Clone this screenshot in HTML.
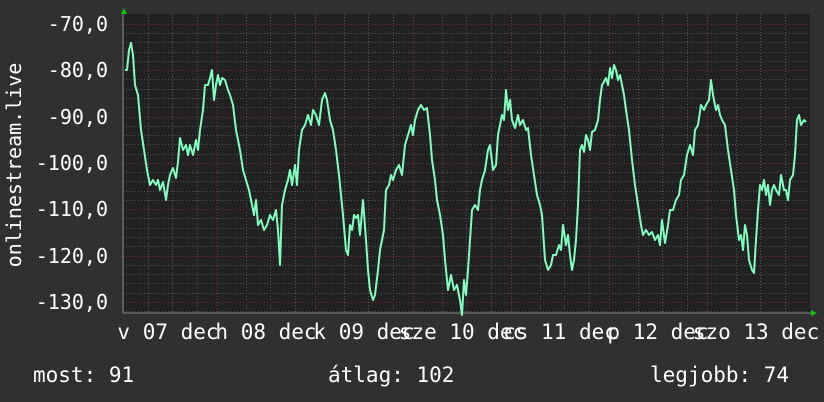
<!DOCTYPE html>
<html><head><meta charset="utf-8"><style>
body{margin:0;background:#303030;width:824px;height:402px;overflow:hidden;font-family:"DejaVu Sans Mono","Liberation Mono",monospace;}
svg{position:absolute;left:0;top:0}
</style></head><body>
<svg width="824" height="402" xmlns="http://www.w3.org/2000/svg" font-family="DejaVu Sans Mono, Liberation Mono, monospace" font-size="20" fill="#fff">
<rect x="0" y="0" width="824" height="402" fill="#303030"/>
<rect x="123" y="14" width="687" height="299" fill="#212121"/>
<g stroke="#555" stroke-width="1" stroke-dasharray="1,2">
<path d="M148.5 14V313M172.5 14V313M197.5 14V313M246.5 14V313M270.5 14V313M295.5 14V313M344.5 14V313M368.5 14V313M393.5 14V313M442.5 14V313M466.5 14V313M491.5 14V313M540.5 14V313M564.5 14V313M589.5 14V313M638.5 14V313M662.5 14V313M687.5 14V313M736.5 14V313M760.5 14V313M785.5 14V313"/>
<path d="M123 33.5H810M123 42.5H810M123 52.5H810M123 61.5H810M123 79.5H810M123 89.5H810M123 98.5H810M123 107.5H810M123 126.5H810M123 135.5H810M123 144.5H810M123 154.5H810M123 172.5H810M123 181.5H810M123 191.5H810M123 200.5H810M123 218.5H810M123 228.5H810M123 237.5H810M123 246.5H810M123 265.5H810M123 274.5H810M123 283.5H810M123 293.5H810M123 311.5H810"/>
</g>
<g stroke="#7a3535" stroke-width="1" stroke-dasharray="1,2">
<path d="M217.5 14V313M315.5 14V313M413.5 14V313M511.5 14V313M609.5 14V313M707.5 14V313"/>
<path d="M123 24.5H810M123 70.5H810M123 117.5H810M123 163.5H810M123 209.5H810M123 256.5H810M123 302.5H810"/>
</g>
<path d="M123 313H812M123 313V10" stroke="#888" stroke-width="1"/>
<path d="M121 14l3-6 3 6z" fill="#0c0"/>
<path d="M811 310l6 3-6 3z" fill="#0c0"/>
<polyline fill="none" stroke="#80ffc0" stroke-width="2" stroke-linejoin="round" points="125,70 127,70 129,50 131,43 133,55 135,85 138,95 141,130 144,150 147,170 150,185 153,180 156,185 158,180 160,190 163,182 166,200 168,185 170,175 173,168 176,178 178,162 180,138 183,150 186,145 188,155 190,145 193,155 196,140 198,150 200,130 203,110 205,85 208,85 210,78 212,70 214,100 216,85 218,75 220,85 222,78 225,80 228,90 230,95 233,105 236,130 240,150 243,170 246,180 249,190 252,205 254,215 256,200 258,225 261,220 264,230 267,225 270,215 273,220 276,210 278,230 280,265 282,205 285,190 288,180 290,170 292,185 295,165 297,185 299,150 302,130 305,125 308,115 311,125 313,110 316,115 319,125 322,100 325,93 327,100 330,120 333,130 336,150 339,175 341,195 343,215 346,250 348,255 350,225 352,230 354,215 356,218 358,215 360,235 363,200 366,240 368,270 370,290 373,300 375,295 378,270 380,250 382,240 384,230 386,190 389,185 391,175 393,180 396,170 399,165 402,175 405,145 408,135 411,125 413,135 415,120 418,110 421,105 424,110 427,108 430,135 432,160 435,180 437,200 440,215 443,235 445,260 448,290 451,275 454,290 457,285 460,300 462,315 464,280 466,295 468,270 472,210 475,205 478,210 480,190 482,180 485,170 488,150 490,145 493,170 496,165 498,135 500,125 502,115 504,120 506,90 508,110 510,100 512,120 515,128 518,115 520,125 523,120 526,130 528,128 531,155 534,175 537,195 540,205 542,215 545,260 548,270 551,265 553,255 556,255 559,245 561,250 563,225 566,245 568,235 570,255 572,270 574,260 576,240 578,205 580,150 582,145 584,152 586,135 588,140 590,150 592,132 595,130 598,120 600,100 602,85 604,82 606,78 608,85 610,68 612,78 614,65 616,70 618,80 620,75 622,85 624,95 626,110 629,130 632,160 635,185 638,205 641,225 643,235 646,230 649,235 652,232 655,240 658,235 660,245 662,220 665,243 668,225 670,210 673,210 676,200 679,195 681,180 684,175 687,155 690,145 693,155 695,130 698,125 701,105 704,110 706,105 709,100 711,80 713,95 716,110 718,105 720,115 722,120 725,125 728,150 731,170 734,190 736,215 739,240 741,235 743,250 745,225 747,235 749,260 752,270 754,273 756,240 758,210 760,185 762,190 764,180 766,195 768,185 770,205 772,190 774,185 776,190 779,195 781,175 784,190 786,190 788,200 790,180 793,175 795,155 797,120 799,115 801,125 804,120 806,122"/>
<g text-anchor="end">
<text x="108" y="31">-70,0</text>
<text x="108" y="77">-80,0</text>
<text x="108" y="124">-90,0</text>
<text x="108" y="170">-100,0</text>
<text x="108" y="216">-110,0</text>
<text x="108" y="263">-120,0</text>
<text x="108" y="309">-130,0</text>
</g>
<text transform="translate(21,165) rotate(-90)" text-anchor="middle">onlinestream.live</text>
<g text-anchor="middle" font-size="21">
<text x="168" y="339">v 07 dec</text>
<text x="266" y="339">h 08 dec</text>
<text x="364" y="339">k 09 dec</text>
<text x="462" y="339">sze 10 dec</text>
<text x="560" y="339">cs 11 dec</text>
<text x="658" y="339">p 12 dec</text>
<text x="756" y="339">szo 13 dec</text>
</g>
<g font-size="21">
<text x="33" y="382">most: 91</text>
<text x="328" y="382">átlag: 102</text>
<text x="650" y="382">legjobb: 74</text>
</g>
</svg>
</body></html>
